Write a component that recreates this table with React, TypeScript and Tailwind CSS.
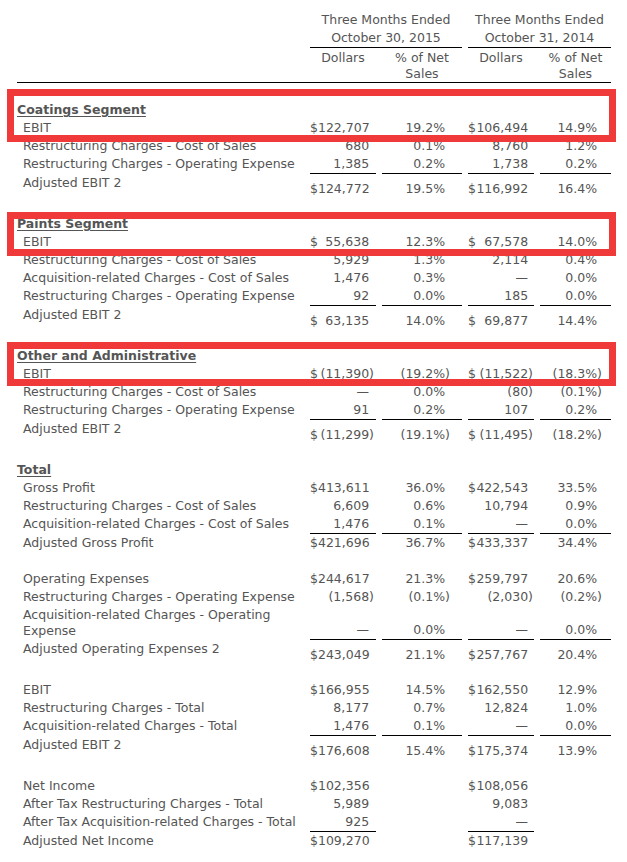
type Row = {
  label: string;
  vals: [string, string, string, string];
  wrap?: string;
};

type Group = {
  title?: string;
  rows: Row[];
  total: Row;
  tall?: boolean;
};

const cols = "grid grid-cols-[287px_66px_80px_66px_71px] gap-x-[6px]";
const pad = ["pr-[2px]", "pr-[12px]", "pr-[1px]", "pr-[9px]"];

const groups: Group[] = [
  {
    title: "Coatings Segment",
    rows: [
      { label: "EBIT", vals: ["$122,707", "19.2%", "$106,494", "14.9%"] },
      { label: "Restructuring Charges - Cost of Sales", vals: ["680", "0.1%", "8,760", "1.2%"] },
      { label: "Restructuring Charges - Operating Expense", vals: ["1,385", "0.2%", "1,738", "0.2%"] },
    ],
    total: { label: "Adjusted EBIT 2", vals: ["$124,772", "19.5%", "$116,992", "16.4%"] },
    tall: true,
  },
  {
    title: "Paints Segment",
    rows: [
      { label: "EBIT", vals: ["$ 55,638", "12.3%", "$ 67,578", "14.0%"] },
      { label: "Restructuring Charges - Cost of Sales", vals: ["5,929", "1.3%", "2,114", "0.4%"] },
      { label: "Acquisition-related Charges - Cost of Sales", vals: ["1,476", "0.3%", "—", "0.0%"] },
      { label: "Restructuring Charges - Operating Expense", vals: ["92", "0.0%", "185", "0.0%"] },
    ],
    total: { label: "Adjusted EBIT 2", vals: ["$ 63,135", "14.0%", "$ 69,877", "14.4%"] },
    tall: true,
  },
  {
    title: "Other and Administrative",
    rows: [
      { label: "EBIT", vals: ["$ (11,390)", "(19.2%)", "$ (11,522)", "(18.3%)"] },
      { label: "Restructuring Charges - Cost of Sales", vals: ["—", "0.0%", "(80)", "(0.1%)"] },
      { label: "Restructuring Charges - Operating Expense", vals: ["91", "0.2%", "107", "0.2%"] },
    ],
    total: { label: "Adjusted EBIT 2", vals: ["$ (11,299)", "(19.1%)", "$ (11,495)", "(18.2%)"] },
    tall: true,
  },
  {
    title: "Total",
    rows: [
      { label: "Gross Profit", vals: ["$413,611", "36.0%", "$422,543", "33.5%"] },
      { label: "Restructuring Charges - Cost of Sales", vals: ["6,609", "0.6%", "10,794", "0.9%"] },
      { label: "Acquisition-related Charges - Cost of Sales", vals: ["1,476", "0.1%", "—", "0.0%"] },
    ],
    total: { label: "Adjusted Gross Profit", vals: ["$421,696", "36.7%", "$433,337", "34.4%"] },
  },
  {
    rows: [
      { label: "Operating Expenses", vals: ["$244,617", "21.3%", "$259,797", "20.6%"] },
      { label: "Restructuring Charges - Operating Expense", vals: ["(1,568)", "(0.1%)", "(2,030)", "(0.2%)"] },
      {
        label: "Acquisition-related Charges - Operating",
        wrap: "Expense",
        vals: ["—", "0.0%", "—", "0.0%"],
      },
    ],
    total: { label: "Adjusted Operating Expenses 2", vals: ["$243,049", "21.1%", "$257,767", "20.4%"] },
    tall: true,
  },
  {
    rows: [
      { label: "EBIT", vals: ["$166,955", "14.5%", "$162,550", "12.9%"] },
      { label: "Restructuring Charges - Total", vals: ["8,177", "0.7%", "12,824", "1.0%"] },
      { label: "Acquisition-related Charges - Total", vals: ["1,476", "0.1%", "—", "0.0%"] },
    ],
    total: { label: "Adjusted EBIT 2", vals: ["$176,608", "15.4%", "$175,374", "13.9%"] },
    tall: true,
  },
  {
    rows: [
      { label: "Net Income", vals: ["$102,356", "", "$108,056", ""] },
      { label: "After Tax Restructuring Charges - Total", vals: ["5,989", "", "9,083", ""] },
      { label: "After Tax Acquisition-related Charges - Total", vals: ["925", "", "—", ""] },
    ],
    total: { label: "Adjusted Net Income", vals: ["$109,270", "", "$117,139", ""] },
  },
];

function Cell({ v, col, line, tall }: { v: string; col: number; line?: boolean; tall?: boolean }) {
  const dollar = v.startsWith("$");
  const body = dollar ? v.slice(1).trim() : v;
  const neg = body.endsWith(")");
  const underline = line && v !== "" ? "border-b border-black" : "";
  return (
    <div
      className={`flex self-end ${tall ? "pb-0" : "py-[1px]"} ${dollar ? "justify-between" : "justify-end"} ${pad[col]} ${underline}`}
    >
      {dollar && <span>$</span>}
      {body !== "" && (
        <span>
          {body}
          {!neg && <span className="invisible">)</span>}
        </span>
      )}
    </div>
  );
}

function Line({ row, line, tall }: { row: Row; line?: boolean; tall?: boolean }) {
  return (
    <div className={`${cols} ${tall ? "h-[23px]" : ""}`}>
      <div className="self-start whitespace-nowrap py-[1px] pl-[6px]">
        {row.label}
        {row.wrap && (
          <>
            <br />
            {row.wrap}
          </>
        )}
      </div>
      {row.vals.map((v, i) => (
        <Cell key={i} v={v} col={i} line={line} tall={tall} />
      ))}
    </div>
  );
}

export default function App() {
  return (
    <div className="relative h-[862px] w-[627px] overflow-hidden bg-white font-['DejaVu_Sans','Liberation_Sans',sans-serif] text-[12.5px] leading-[16px] text-[#555]">
      <div className="pl-[17px] pr-[16px] pt-[11px]">
        <div className={cols}>
          <div />
          <div className="col-span-2 border-b border-black text-center leading-[18px]">
            Three Months Ended
            <br />
            October 30, 2015
          </div>
          <div className="col-span-2 border-b border-black text-center leading-[18px]">
            Three Months Ended
            <br />
            October 31, 2014
          </div>
        </div>
        <div className={`${cols} border-b border-black pt-[2px]`}>
          <div />
          <div className="text-center">Dollars</div>
          <div className="text-center">
            % of Net
            <br />
            Sales
          </div>
          <div className="text-center">Dollars</div>
          <div className="text-center">
            % of Net
            <br />
            Sales
          </div>
        </div>

        {groups.map((g, gi) => (
          <div key={gi} className="pt-[18px]">
            {g.title && (
              <div className="py-[1px] font-bold underline underline-offset-2">{g.title}</div>
            )}
            {g.rows.map((r, ri) => (
              <Line key={ri} row={r} line={ri === g.rows.length - 1} />
            ))}
            <Line row={g.total} tall={g.tall} />
          </div>
        ))}
      </div>

      <div className="absolute left-[7px] top-[89px] h-[53px] w-[609px] border-[7px] border-[#f03a3a]" />
      <div className="absolute left-[7px] top-[212px] h-[44px] w-[609px] border-[7px] border-[#f03a3a]" />
      <div className="absolute left-[7px] top-[342px] h-[44px] w-[609px] border-[7px] border-[#f03a3a]" />
    </div>
  );
}
